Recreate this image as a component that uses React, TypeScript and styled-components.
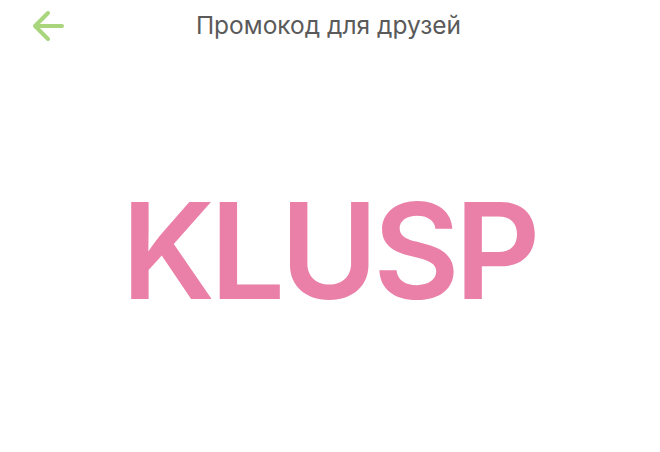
import React from 'react';
import styled, { createGlobalStyle } from 'styled-components';

const GlobalStyle = createGlobalStyle`
  html, body {
    margin: 0;
    padding: 0;
    background: #ffffff;
    font-family: Inter, "Noto Sans", sans-serif;
  }
`;

const Screen = styled.div`
  width: 660px;
  height: 452px;
  display: flex;
  flex-direction: column;
  background: #ffffff;
`;

const Header = styled.div`
  position: relative;
  height: 52px;
  display: flex;
  align-items: center;
  justify-content: center;
`;

const BackButton = styled.button`
  position: absolute;
  left: 28px;
  top: 6px;
  width: 40px;
  height: 40px;
  padding: 0;
  border: none;
  background: none;
  display: flex;
  align-items: center;
  justify-content: center;
  cursor: pointer;
`;

const Title = styled.h1`
  margin: 0;
  padding-bottom: 2px;
  font-size: 24.5px;
  font-weight: 400;
  color: #5a5a5a;
  padding-right: 3px;
`;

const Body = styled.div`
  flex: 1;
  display: flex;
  align-items: center;
  justify-content: center;
  padding-bottom: 4px;
`;

const Code = styled.div`
  font-size: 133px;
  font-weight: 600;
  color: #ea80a8;
  letter-spacing: -5px;
  line-height: 1;
  padding-right: 3px;
`;

const ArrowIcon = () => (
  <svg width="34" height="34" viewBox="0 0 34 34" fill="none">
    <path
      d="M31 17H4M17 4L4 17L17 30"
      stroke="#a9d57c"
      strokeWidth="4"
      strokeLinecap="round"
      strokeLinejoin="round"
    />
  </svg>
);

export default function App() {
  return (
    <>
      <GlobalStyle />
      <Screen>
        <Header>
          <BackButton aria-label="Назад">
            <ArrowIcon />
          </BackButton>
          <Title>Промокод для друзей</Title>
        </Header>
        <Body>
          <Code>KLUSP</Code>
        </Body>
      </Screen>
    </>
  );
}
